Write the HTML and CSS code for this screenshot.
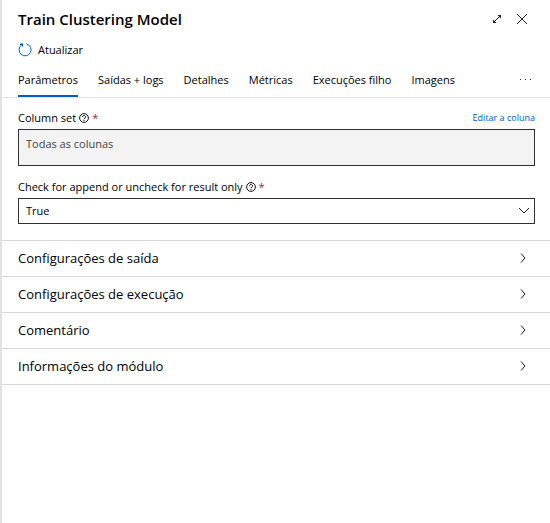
FILE: index.html
```html
<!DOCTYPE html>
<html lang="pt-BR">
<head>
<meta charset="utf-8">
<title>Train Clustering Model</title>
<link rel="stylesheet" href="styles.css">
</head>
<body>
<main class="panel">
  <header class="header">
    <h1 class="title">Train Clustering Model</h1>
    <button class="icon-button" type="button" aria-label="Expandir">
      <svg width="10" height="10" viewBox="0 0 10 10"><path d="M2 8l6-6"/><path class="solid" d="M5.500 1H9v3.500zM1 5.500V9h3.500z"/></svg>
    </button>
    <button class="icon-button" type="button" aria-label="Fechar">
      <svg width="12" height="12" viewBox="0 0 12 12"><path d="M1 1l10 10M11 1L1 11"/></svg>
    </button>
  </header>

  <button class="refresh" type="button">
    <svg width="14" height="14" viewBox="0 0 14 14"><path d="M8.500 1A6 6 0 1 1 3.500 2"/><path class="solid" d="M2 .5h3v3H4V2H2z"/></svg>
    <span>Atualizar</span>
  </button>

  <nav class="tabs">
    <a class="tab tab-active" href="#parametros" aria-current="page">Parâmetros</a>
    <a class="tab" href="#saidas">Saídas + logs</a>
    <a class="tab" href="#detalhes">Detalhes</a>
    <a class="tab" href="#metricas">Métricas</a>
    <a class="tab" href="#execucoes">Execuções filho</a>
    <a class="tab" href="#imagens">Imagens</a>
    <button class="more" type="button" aria-label="Mais">
      <svg width="12" height="2" viewBox="0 0 12 2"><path d="M0 0h1v1H0zM5 0h1v1H5zM10 0h1v1h-1z"/></svg>
    </button>
  </nav>

  <form class="form">
    <div class="field">
      <div class="label-row">
        <label for="columns">Column set</label>
        <svg class="help" width="10" height="10" viewBox="0 0 10 10"><circle cx="5" cy="5" r="4.400"/><path d="M3.500 4a1.500 1.500 0 1 1 2.400 1.100Q5 5.600 5 6.300M5 7v1"/></svg>
        <span class="required">*</span>
        <a class="edit" href="#editar">Editar a coluna</a>
      </div>
      <textarea class="control columns" id="columns" rows="1" readonly>Todas as colunas</textarea>
    </div>
    <div class="field">
      <div class="label-row">
        <label for="append">Check for append or uncheck for result only</label>
        <svg class="help" width="10" height="10" viewBox="0 0 10 10"><circle cx="5" cy="5" r="4.400"/><path d="M3.500 4a1.500 1.500 0 1 1 2.400 1.100Q5 5.600 5 6.300M5 7v1"/></svg>
        <span class="required">*</span>
      </div>
      <div class="select-wrap">
        <select class="control select" id="append"><option>True</option><option>False</option></select>
        <svg class="caret" width="12" height="8" viewBox="0 0 12 8"><path d="M1 1l5 5 5-5"/></svg>
      </div>
    </div>
  </form>

  <section class="sections">
    <button class="section" type="button"><span>Configurações de saída</span><svg width="6" height="10" viewBox="0 0 6 10"><path d="M1 .5L5 5 1 9.500"/></svg></button>
    <button class="section" type="button"><span>Configurações de execução</span><svg width="6" height="10" viewBox="0 0 6 10"><path d="M1 .5L5 5 1 9.500"/></svg></button>
    <button class="section" type="button"><span>Comentário</span><svg width="6" height="10" viewBox="0 0 6 10"><path d="M1 .5L5 5 1 9.500"/></svg></button>
    <button class="section" type="button"><span>Informações do módulo</span><svg width="6" height="10" viewBox="0 0 6 10"><path d="M1 .5L5 5 1 9.500"/></svg></button>
  </section>
</main>
</body>
</html>
```
FILE: styles.css
```css
* {
  box-sizing: border-box;
}

body {
  margin: 0;
  background: #fff;
  color: #000;
  font: 11px/16px "Open Sans", "Noto Sans", sans-serif;
}

button {
  margin: 0;
  padding: 0;
  border: 0;
  background: none;
  color: inherit;
  font: inherit;
  cursor: pointer;
}

a {
  color: inherit;
  text-decoration: none;
}

svg {
  display: block;
  flex: none;
  fill: none;
  stroke: #222;
}

.solid {
  fill: #222;
  stroke: none;
}

.panel {
  min-height: 100vh;
  border-left: 2px solid #e2e2e2;
}

.header {
  display: flex;
  align-items: center;
  gap: 14px;
  padding: 8px 22px 0 16px;
}

.title {
  flex: 1;
  margin: 0;
  font-size: 15px;
  line-height: 22px;
  font-weight: 600;
}

.refresh {
  display: flex;
  align-items: center;
  gap: 6px;
  margin: 12px 0 0 16px;
}

.refresh svg {
  stroke: #015cda;
}

.refresh .solid {
  fill: #015cda;
  stroke: none;
}

.tabs {
  display: flex;
  gap: 20px;
  padding: 8px 18px 0 16px;
  border-bottom: 1px solid #e6e6e6;
}

.tab {
  padding: 6px 0 7px;
  border-bottom: 2px solid transparent;
  white-space: nowrap;
}

.tab-active {
  border-color: #015cda;
}

.more {
  margin: 0 0 4px auto;
}

.more svg {
  fill: #333;
  stroke: none;
}

.form {
  display: grid;
  gap: 13px;
  padding: 12px 15px 16px 16px;
}

.label-row {
  display: flex;
  align-items: center;
  gap: 3px;
  margin-bottom: 3px;
}

.help {
  stroke: #111;
}

.required {
  color: #a4262c;
}

.edit {
  margin-left: auto;
  color: #015cda;
  font-size: 9px;
}

.control {
  display: block;
  width: 100%;
  margin: 0;
  border: 1px solid #323130;
  border-radius: 0;
  background: #fff;
  color: #000;
  font: inherit;
}

.columns {
  height: 37px;
  padding: 6px 7px;
  background: #f3f3f3;
  color: #444;
  resize: none;
  overflow: hidden;
}

.select-wrap {
  position: relative;
}

.select {
  height: 26px;
  padding: 0 7px;
  appearance: none;
}

.caret {
  position: absolute;
  right: 5px;
  top: 9px;
  pointer-events: none;
}

.sections {
  border-top: 1px solid #d8d8d8;
}

.section {
  display: flex;
  align-items: center;
  justify-content: space-between;
  width: 100%;
  height: 36px;
  padding: 0 24px 2px 16px;
  border-bottom: 1px solid #d8d8d8;
  font-size: 13px;
}
```
